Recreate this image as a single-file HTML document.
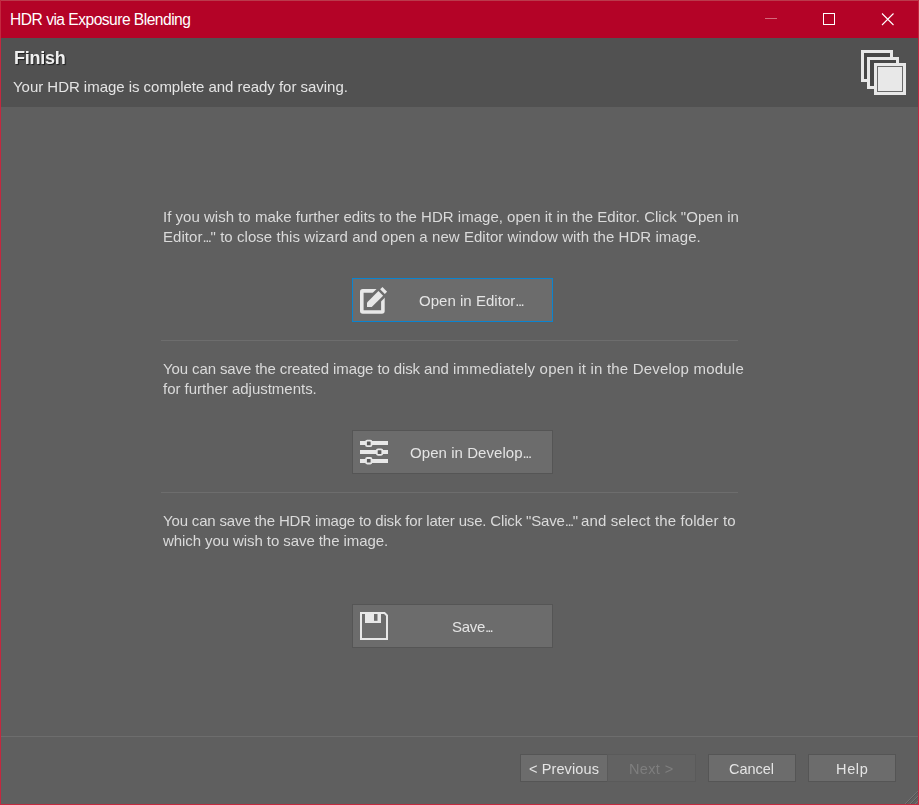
<!DOCTYPE html>
<html><head><meta charset="utf-8">
<style>
html,body{margin:0;padding:0;width:919px;height:805px;overflow:hidden;background:#5f5f5f;}
body{position:relative;font-family:"Liberation Sans",sans-serif;}
.abs{position:absolute;}
.gs{will-change:transform;}
.t{position:absolute;white-space:nowrap;}
.txt{position:absolute;color:#dadada;font-size:15px;white-space:nowrap;line-height:20px;will-change:transform;}
.bt{position:absolute;color:#e4e4e4;font-size:15px;white-space:nowrap;line-height:18px;will-change:transform;}
</style></head><body>
<svg class="abs" style="left:0;top:0" width="919" height="805" shape-rendering="crispEdges">
<!-- window frame -->
<rect x="0" y="0" width="919" height="38" fill="#b40327"/>
<rect x="0" y="38" width="919" height="69" fill="#515151"/>
<rect x="0" y="107" width="919" height="698" fill="#5f5f5f"/>
<rect x="0" y="0" width="919" height="1" fill="#bb3a4c"/>
<rect x="0" y="0" width="1" height="805" fill="#c4283f"/>
<rect x="918" y="0" width="1" height="805" fill="#c4283f"/>
<rect x="0" y="804" width="919" height="1" fill="#c4283f"/>
<!-- separators -->
<rect x="161" y="340" width="577" height="1" fill="#6d6d6d"/>
<rect x="161" y="492" width="577" height="1" fill="#6d6d6d"/>
<rect x="1" y="736" width="917" height="1" fill="#6d6d6d"/>
<!-- big buttons -->
<rect x="352" y="278" width="201" height="44" fill="#0a84d0"/>
<rect x="353" y="279" width="199" height="42" fill="#6c6c6c"/>
<rect x="352" y="430" width="201" height="44" fill="#555555"/>
<rect x="353" y="431" width="199" height="42" fill="#6c6c6c"/>
<rect x="352" y="604" width="201" height="44" fill="#555555"/>
<rect x="353" y="605" width="199" height="42" fill="#6c6c6c"/>
<!-- bottom buttons -->
<rect x="520" y="754" width="88" height="28" fill="#555555"/>
<rect x="521" y="755" width="86" height="26" fill="#6c6c6c"/>
<rect x="607" y="754" width="89" height="28" fill="#5a5a5a"/>
<rect x="608" y="755" width="87" height="26" fill="#626262"/>
<rect x="708" y="754" width="88" height="28" fill="#555555"/>
<rect x="709" y="755" width="86" height="26" fill="#6c6c6c"/>
<rect x="808" y="754" width="88" height="28" fill="#555555"/>
<rect x="809" y="755" width="86" height="26" fill="#6c6c6c"/>
</svg>
<svg class="abs" style="left:0;top:0" width="919" height="805">
<!-- title buttons -->
<rect x="765" y="18" width="12" height="1" fill="#d46a7c" shape-rendering="crispEdges"/>
<rect x="823.5" y="13.5" width="11" height="11" fill="none" stroke="#fff" stroke-width="1" shape-rendering="crispEdges"/>
<path d="M882 13.5 L893.5 25 M893.5 13.5 L882 25" stroke="#fff" stroke-width="1.1" fill="none"/>
<!-- header icon -->
<g shape-rendering="crispEdges">
<rect x="861" y="50" width="32" height="32" fill="#e8e8e8"/>
<rect x="864" y="53" width="26" height="26" fill="#474747"/>
<rect x="867" y="57" width="32" height="32" fill="#e8e8e8"/>
<rect x="870" y="60" width="26" height="26" fill="#474747"/>
<rect x="874" y="63" width="32" height="32" fill="#e8e8e8"/>
<rect x="877" y="66" width="26" height="26" fill="#6a6a6a"/>
<rect x="878" y="67" width="24" height="24" fill="#e8e8e8"/>
</g>
<!-- edit icon -->
<defs>
<mask id="m1" maskUnits="userSpaceOnUse" x="340" y="270" width="60" height="60">
<rect x="340" y="270" width="60" height="60" fill="#fff"/>
<polygon points="367.82,297.82 387.82,277.82 396.23,286.23 376.23,306.23" fill="#000"/>
</mask>
</defs>
<rect x="361.8" y="290.9" width="21.1" height="21.1" rx="1" fill="none" stroke="#e8e8e8" stroke-width="3.6" mask="url(#m1)"/>
<polygon points="367,302.45 367,307 371.74,307 383.08,295.66 378.44,291.01" fill="#e8e8e8"/>
<polygon points="380.13,289.33 382.45,287 387.1,291.65 384.77,293.97" fill="#e8e8e8"/>
<!-- sliders icon -->
<g fill="#e8e8e8">
<rect x="360" y="441" width="28" height="4"/>
<rect x="360" y="450" width="28" height="4"/>
<rect x="360" y="459" width="28" height="4"/>
</g>
<g fill="#595959" stroke="#e8e8e8" stroke-width="1.8">
<rect x="366" y="440.7" width="5.5" height="5.5" rx="1.2"/>
<rect x="376.8" y="449.3" width="5.5" height="5.5" rx="1.2"/>
<rect x="366" y="458" width="5.5" height="5.5" rx="1.2"/>
</g>
<!-- floppy icon -->
<path d="M361 613 H384.5 L387 615.5 V639 H361 Z" fill="none" stroke="#e8e8e8" stroke-width="2"/>
<rect x="365" y="613" width="16" height="10" fill="#e8e8e8"/>
<rect x="374" y="614" width="3.5" height="6.8" fill="#6c6c6c"/>
<!-- resize grip -->
<path d="M905 804 L918 791 M910 804 L918 796 M915 804 L918 801" stroke="#767676" stroke-width="0.9"/><path d="M906 804 L918 792 M911 804 L918 797" stroke="#505050" stroke-width="0.7"/>
</svg>

<div id="t1" class="t" style="left:10.1px;top:11px;font-size:15.6px;line-height:18px;color:#fff;letter-spacing:-0.52px;">HDR via Exposure Blending</div>
<div id="t2" class="t gs" style="left:13.6px;top:47px;font-size:18px;font-weight:bold;color:#efefef;text-shadow:1px 1px 1px #1e1e1e;line-height:22px;letter-spacing:-0.26px;">Finish</div>
<div id="t3" class="t gs" style="left:13px;top:78px;font-size:15px;color:#e4e4e4;line-height:18px;letter-spacing:-0.03px;">Your HDR image is complete and ready for saving.</div>

<div id="p1a" class="txt" style="left:163px;top:207px;letter-spacing:0.012px;">If you wish to make further edits to the HDR image, open it in the Editor. Click "Open in</div>
<div id="p1b" class="txt" style="left:163px;top:227px;letter-spacing:0.054px;">Editor<span style="letter-spacing:-1.5px">...</span>" to close this wizard and open a new Editor window with the HDR image.</div>
<div id="b1" class="bt" style="left:418.8px;top:292px;letter-spacing:0.027px;">Open in Editor<span style="letter-spacing:-1.5px">...</span></div>

<div id="p2a1" class="txt" style="left:163px;top:359px;letter-spacing:-0.114px;">You can save the created image to disk and</div>
<div id="p2a2" class="txt" style="left:452.8px;top:359px;letter-spacing:0.202px;">immediately open it in the Develop module</div>
<div id="p2b" class="txt" style="left:163px;top:379px;letter-spacing:-0.02px;">for further adjustments.</div>
<div id="b2" class="bt" style="left:410.2px;top:444px;letter-spacing:0.058px;">Open in Develop<span style="letter-spacing:-1.5px">...</span></div>

<div id="p3a1" class="txt" style="left:163px;top:511px;letter-spacing:-0.162px;">You can save the HDR image to disk for later use. Click "Save<span style="letter-spacing:-1.5px">...</span>"</div>
<div id="p3a2" class="txt" style="left:581.4px;top:511px;letter-spacing:0.121px;">and select the folder to</div>
<div id="p3b" class="txt" style="left:163px;top:531px;letter-spacing:-0.078px;">which you wish to save the image.</div>
<div id="b3" class="bt" style="left:451.6px;top:618px;letter-spacing:-0.3px;">Save<span style="letter-spacing:-1.9px">...</span></div>

<div id="s1" class="bt" style="left:529.2px;top:760px;font-size:14.5px;letter-spacing:0.111px;">&lt; Previous</div>
<div id="s2" class="bt" style="left:628.8px;top:760px;font-size:14.5px;color:#7e7e7e;letter-spacing:0.36px;">Next &gt;</div>
<div id="s3" class="bt" style="left:729px;top:760px;font-size:14.5px;letter-spacing:-0.04px;">Cancel</div>
<div id="s4" class="bt" style="left:835.6px;top:760px;font-size:14.5px;letter-spacing:0.666px;">Help</div>
</body></html>
